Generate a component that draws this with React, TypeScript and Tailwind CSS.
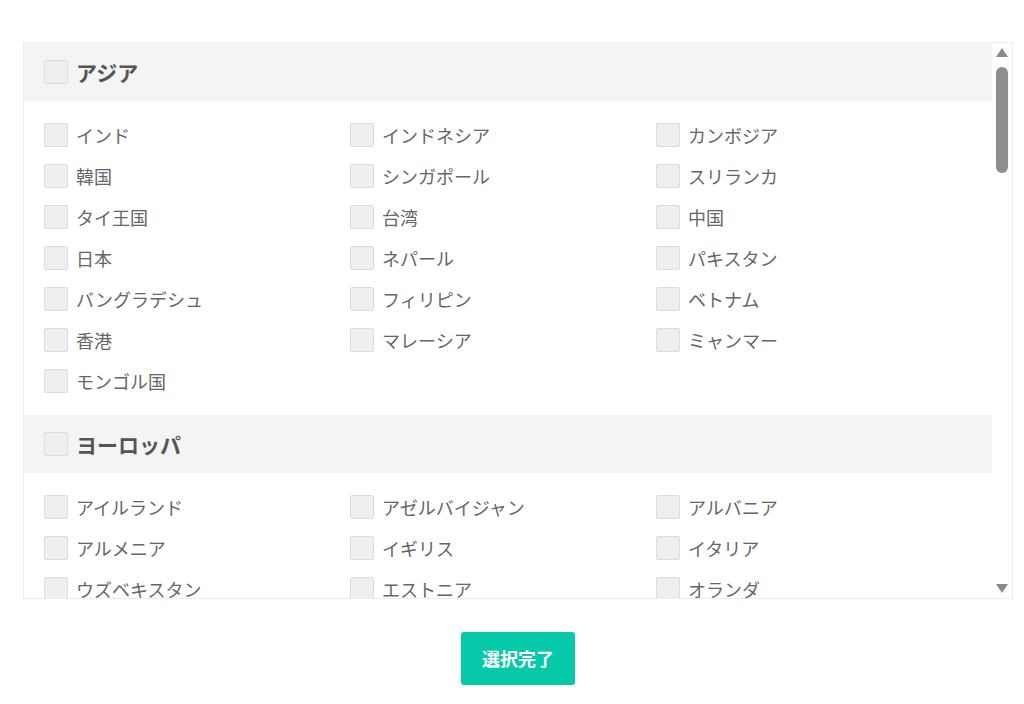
const regions: { name: string; countries: string[] }[] = [
  {
    name: "アジア",
    countries: [
      "インド", "インドネシア", "カンボジア",
      "韓国", "シンガポール", "スリランカ",
      "タイ王国", "台湾", "中国",
      "日本", "ネパール", "パキスタン",
      "バングラデシュ", "フィリピン", "ベトナム",
      "香港", "マレーシア", "ミャンマー",
      "モンゴル国",
    ],
  },
  {
    name: "ヨーロッパ",
    countries: [
      "アイルランド", "アゼルバイジャン", "アルバニア",
      "アルメニア", "イギリス", "イタリア",
      "ウズベキスタン", "エストニア", "オランダ",
      "オーストリア", "カザフスタン", "キルギス",
      "ギリシャ", "クロアチア", "ジョージア",
      "スイス", "スウェーデン", "スペイン",
      "スロバキア", "スロベニア", "セルビア",
      "チェコ", "デンマーク", "ドイツ",
      "トルコ", "ノルウェー", "ハンガリー",
      "フィンランド", "フランス", "ブルガリア",
      "ベラルーシ", "ベルギー", "ポーランド",
      "ポルトガル", "マルタ", "モルドバ",
      "ラトビア", "リトアニア", "ルーマニア",
      "ルクセンブルク", "ロシア", "ウクライナ",
    ],
  },
  {
    name: "北米",
    countries: ["アメリカ", "カナダ"],
  },
  {
    name: "中南米",
    countries: [
      "アルゼンチン", "ウルグアイ", "エクアドル",
      "エルサルバドル", "キューバ", "グアテマラ",
      "コスタリカ", "コロンビア", "ジャマイカ",
      "チリ", "ドミニカ共和国", "パナマ",
      "パラグアイ", "ブラジル", "ペルー",
      "ボリビア", "ホンジュラス", "メキシコ",
    ],
  },
  {
    name: "オセアニア",
    countries: ["オーストラリア", "ニュージーランド", "パプアニューギニア", "フィジー"],
  },
  {
    name: "中東",
    countries: [
      "アラブ首長国連邦", "イスラエル", "イラン",
      "オマーン", "カタール", "クウェート",
      "サウジアラビア", "バーレーン", "ヨルダン",
    ],
  },
  {
    name: "アフリカ",
    countries: [
      "アルジェリア", "ウガンダ", "エジプト",
      "エチオピア", "ガーナ", "ケニア",
      "コートジボワール", "セネガル", "タンザニア",
      "チュニジア", "ナイジェリア", "南アフリカ",
      "モロッコ", "モザンビーク", "ルワンダ",
    ],
  },
];

function Box() {
  return (
    <span className="block h-6 w-6 shrink-0 rounded-[2px] border border-[#dcdcdc] bg-[#efefef]" />
  );
}

// drawn scrollbar (the native one is an overlay in headless chrome)
function ScrollBar() {
  return (
    <div className="flex w-[20px] shrink-0 flex-col items-center pt-[5px] pb-[5px]">
      <svg width="12" height="9" viewBox="0 0 12 9">
        <polygon points="6,0 12,9 0,9" fill="#8a8a8a" />
      </svg>
      <div className="mt-[10px] h-[106px] w-[12px] rounded-full bg-[#8e8e8e]" />
      <div className="flex-1" />
      <svg width="12" height="9" viewBox="0 0 12 9">
        <polygon points="0,0 12,0 6,9" fill="#8a8a8a" />
      </svg>
    </div>
  );
}

export default function App() {
  return (
    <div
      className="min-h-[704px] bg-white pt-[42px]"
      style={{ fontFamily: '"Noto Sans CJK JP", "Noto Sans", sans-serif' }}
    >
      <div className="mx-[23px] w-[990px]">
        <div className="flex h-[557px] border border-[#ececec]">
          <div className="flex-1 overflow-hidden">
            {regions.map((region) => (
              <section key={region.name}>
                <div className="flex h-[58px] items-center gap-2 bg-[#f4f4f4] pl-5">
                  <Box />
                  <span className="text-[21px] font-bold leading-none text-[#555]">{region.name}</span>
                </div>
                <div className="grid grid-cols-3 gap-y-[17px] py-[22px] pl-5 pr-[30px]">
                  {region.countries.map((c) => (
                    <label key={c} className="flex h-6 items-center gap-2">
                      <Box />
                      <span className="text-[18px] leading-none text-[#666]">{c}</span>
                    </label>
                  ))}
                </div>
              </section>
            ))}
          </div>
          <ScrollBar />
        </div>
        <div className="flex justify-center pt-[33px]">
          <button className="h-[53px] w-[114px] rounded-[3px] bg-[#05c9a8] text-[18px] font-bold text-white">
            選択完了
          </button>
        </div>
      </div>
    </div>
  );
}
